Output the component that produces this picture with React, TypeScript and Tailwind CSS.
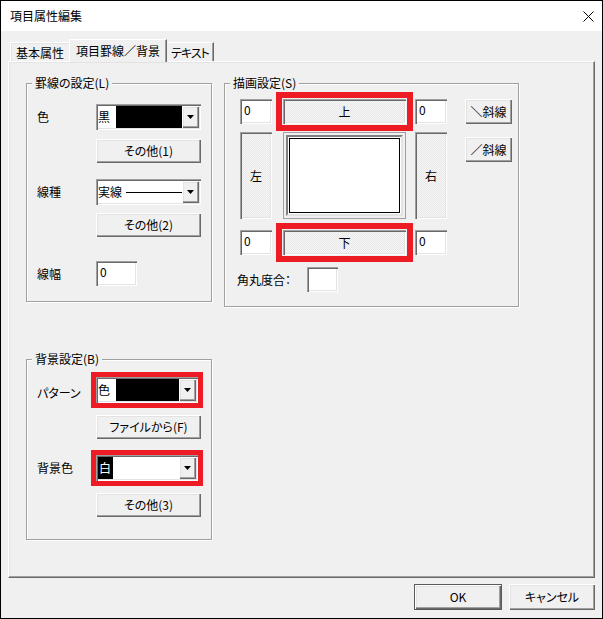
import React from 'react'

const raised =
  'bg-[#f0f0f0] shadow-[inset_1px_1px_0_#fff,inset_-1px_-1px_0_#696969,inset_-2px_-2px_0_#a0a0a0,inset_2px_2px_0_#e3e3e3]'
const sunken =
  'shadow-[inset_1px_1px_0_#a0a0a0,inset_2px_2px_0_#696969,inset_-1px_-1px_0_#fff,inset_-2px_-2px_0_#e3e3e3]'
const hatch =
  'bg-[repeating-conic-gradient(#e6e6e6_0%_25%,#f8f8f8_0%_50%)] bg-[length:2px_2px]'

function Btn({ children, className = '' }: { children: React.ReactNode; className?: string }) {
  return (
    <div className={`flex items-center justify-center text-[12px] leading-[16px] ${raised} ${className}`}>
      {children}
    </div>
  )
}

function TextBox({ value = '', className = '' }: { value?: string; className?: string }) {
  return (
    <div className={`bg-white pl-[4px] pt-[4px] text-[12px] leading-[14px] ${sunken} ${className}`}>{value}</div>
  )
}

function Arrow() {
  return (
    <svg width="7" height="4" viewBox="0 0 7 4">
      <path d="M0 0h7L3.5 4z" fill="#000" />
    </svg>
  )
}

function Combo({ children, className = '' }: { children: React.ReactNode; className?: string }) {
  return (
    <div className={`flex h-[26px] bg-white p-[2px] ${sunken} ${className}`}>
      <div className="flex min-w-0 flex-1 items-stretch text-[12px] leading-[16px]">{children}</div>
      <div className={`flex w-[17px] items-center justify-center ${raised}`}>
        <Arrow />
      </div>
    </div>
  )
}

function Group({
  title,
  className = '',
  children,
}: {
  title: string
  className?: string
  children: React.ReactNode
}) {
  return (
    <div className={`relative border border-[#a0a0a0] shadow-[inset_1px_1px_0_#fff,1px_1px_0_#fff] ${className}`}>
      <span className="absolute -top-[9px] left-[5px] bg-[#f0f0f0] px-[3px] text-[12px] leading-[16px]">{title}</span>
      {children}
    </div>
  )
}

function Hatched({ children, className = '' }: { children: React.ReactNode; className?: string }) {
  return (
    <div className={`flex items-center justify-center text-[12px] ${hatch} ${sunken} ${className}`}>{children}</div>
  )
}

export default function App() {
  return (
    <div className="h-[619px] w-[603px] border border-black bg-[#f0f0f0] font-['Noto_Sans_CJK_JP',sans-serif] text-black [font-feature-settings:'palt']">
      <div className="flex h-[30px] items-center justify-between bg-white pl-[9px] pr-[8px] text-[12px]">
        <span>項目属性編集</span>
        <svg width="11" height="11" viewBox="0 0 11 11">
          <path d="M0.5 0.5l10 10M10.5 0.5l-10 10" stroke="#000" strokeWidth="1" />
        </svg>
      </div>

      <div className="px-[7px] pt-[8px]">
        <div className="relative z-10 ml-[2px] flex h-[22px] items-end text-[12px] leading-[16px]">
          <div className="h-[19px] w-[59px] border-l border-t border-white pl-[5px] pt-[2px] shadow-[inset_1px_1px_0_#e3e3e3]">
            基本属性
          </div>
          <div className="h-[23px] w-[98px] self-start border-l border-r border-t border-white border-r-[#696969] bg-[#f0f0f0] pl-[6px] pt-[3px] shadow-[inset_-1px_0_0_#a0a0a0]">
            項目罫線／背景
          </div>
          <div className="h-[19px] w-[47px] whitespace-nowrap border-r border-t border-white border-r-[#696969] pl-[4px] pt-[2px] tracking-[-1px] shadow-[inset_-1px_0_0_#a0a0a0]">
            テキスト
          </div>
        </div>

        <div className="h-[517px] border border-white border-b-[#696969] border-r-[#696969] pl-[17px] pt-[21px] shadow-[inset_-1px_-1px_0_#a0a0a0,inset_1px_1px_0_#e3e3e3]">
          <div className="flex items-start gap-[12px] text-[12px]">
            <div className="flex w-[186px] flex-col">
              <Group title="罫線の設定(L)" className="h-[219px] pl-[10px] pt-[20px]">
                <div className="flex h-[26px] items-center">
                  <span className="w-[59px]">色</span>
                  <Combo className="w-[105px]">
                    <span className="w-[18px] self-center">黒</span>
                    <span className="flex-1 bg-black" />
                  </Combo>
                </div>
                <Btn className="ml-[59px] mt-[9px] h-[24px] w-[105px]">その他(1)</Btn>
                <div className="mt-[16px] flex h-[26px] items-center">
                  <span className="w-[59px]">線種</span>
                  <Combo className="w-[105px]">
                    <span className="self-center">実線</span>
                    <span className="ml-[4px] flex flex-1 items-center">
                      <span className="h-px w-full bg-black" />
                    </span>
                  </Combo>
                </div>
                <Btn className="ml-[59px] mt-[8px] h-[24px] w-[105px]">その他(2)</Btn>
                <div className="mt-[24px] flex h-[25px] items-center">
                  <span className="w-[59px]">線幅</span>
                  <TextBox value="0" className="h-[25px] w-[41px]" />
                </div>
              </Group>

              <Group title="背景設定(B)" className="mt-[57px] h-[181px] pl-[10px] pt-[17px]">
                <div className="flex h-[25px] items-center">
                  <span className="w-[59px] pt-[6px]">パターン</span>
                  <Combo className="h-[25px] w-[102px] outline-[5px] outline-[#ed1c24] outline-solid">
                    <span className="w-[18px] self-center">色</span>
                    <span className="flex-1 bg-black" />
                  </Combo>
                </div>
                <Btn className="ml-[59px] mt-[13px] h-[24px] w-[105px]">ファイルから(F)</Btn>
                <div className="mt-[16px] flex h-[25px] items-center">
                  <span className="w-[59px]">背景色</span>
                  <Combo className="h-[25px] w-[102px] outline-[5px] outline-[#ed1c24] outline-solid">
                    <span className="flex w-[15px] items-center bg-black pl-px text-white">白</span>
                  </Combo>
                </div>
                <Btn className="ml-[59px] mt-[13px] h-[24px] w-[105px]">その他(3)</Btn>
              </Group>
            </div>

            <Group title="描画設定(S)" className="h-[224px] w-[295px] pl-[15px] pt-[15px]">
              <div className="grid grid-cols-[43px_132px_50px_47px] grid-rows-[33px_98px_25px]">
                <TextBox value="0" className="h-[25px] w-[32px]" />
                <Hatched className="h-[25px] w-[123px] outline-[6px] outline-offset-[1px] outline-[#ed1c24] outline-solid">
                  上
                </Hatched>
                <TextBox value="0" className="h-[25px] w-[32px]" />
                <Btn className="h-[25px] w-[47px]">＼斜線</Btn>

                <Hatched className="h-[87px] w-[32px]">左</Hatched>
                <div className="h-[87px] w-[123px] border border-[#a0a0a0] bg-[#f0f0f0] p-[2px]">
                  <div className="h-full w-full border-2 border-[#808080] border-b-[#e3e3e3] border-r-[#e3e3e3] bg-white p-[1px]">
                    <div className="h-full w-full border border-black" />
                  </div>
                </div>
                <Hatched className="h-[87px] w-[32px]">右</Hatched>
                <Btn className="mt-[5px] h-[25px] w-[47px]">／斜線</Btn>

                <TextBox value="0" className="h-[25px] w-[32px]" />
                <Hatched className="h-[25px] w-[123px] outline-[6px] outline-offset-[1px] outline-[#ed1c24] outline-solid">
                  下
                </Hatched>
                <TextBox value="0" className="h-[25px] w-[32px]" />
              </div>
              <div className="-ml-[3px] mt-[12px] flex h-[25px] items-center">
                <span className="w-[70px]">角丸度合：</span>
                <TextBox className="h-[25px] w-[31px]" />
              </div>
            </Group>
          </div>
        </div>

        <div className="mt-[6px] flex justify-end gap-[7px] text-[12px]">
          <Btn className="h-[26px] w-[88px] border border-[#5a5a5a]">OK</Btn>
          <Btn className="h-[26px] w-[86px]">キャンセル</Btn>
        </div>
      </div>
    </div>
  )
}
